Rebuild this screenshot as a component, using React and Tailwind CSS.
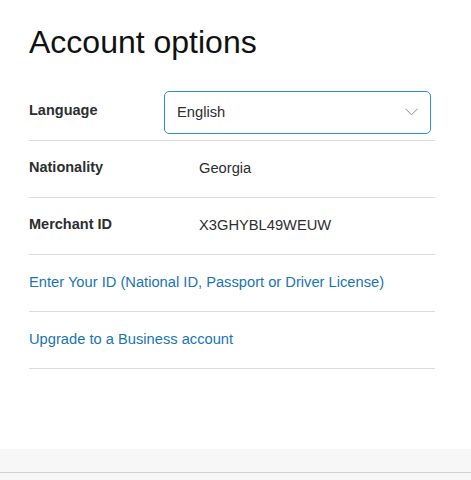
import { useState } from 'react';

const rows = [
  { label: 'Nationality', value: 'Georgia' },
  { label: 'Merchant ID', value: 'X3GHYBL49WEUW' },
];

const links = [
  'Enter Your ID (National ID, Passport or Driver License)',
  'Upgrade to a Business account',
];

function Chevron() {
  return (
    <svg width="13" height="8" viewBox="0 0 13 8" fill="none" className="shrink-0">
      <path d="M0.5 0.8 L6.5 6.8 L12.5 0.8" stroke="#8a8c8e" strokeWidth="1" />
    </svg>
  );
}

export default function App() {
  const [language] = useState('English');

  return (
    <div className="w-[471px] h-[480px] bg-white flex flex-col text-[#2c2e2f] font-['Liberation_Sans',Arial,sans-serif]">
      <div className="flex-1 pl-[29px]">
        <div className="w-[406px]">
          <h1 className="h-[84px] pt-[24px] text-[32px] leading-[37px] text-[#111]">Account options</h1>

          {/* Language */}
          <div className="h-[57px] flex items-center border-b border-[#dcdcdc]">
            <span className="w-[135px] text-[14.5px] font-bold -mt-[2px]">Language</span>
            <div className="w-[267px] h-[43px] flex items-center justify-between pl-[12px] pr-[12px] border border-[#2f8fc5] rounded-[5px]">
              <span className="text-[14.7px] text-[#2c2e2f]">{language}</span>
              <Chevron />
            </div>
          </div>

          {rows.map((r) => (
            <div key={r.label} className="h-[57px] flex items-center border-b border-[#dcdcdc]">
              <span className="w-[170px] text-[14.5px] font-bold -mt-[2px]">{r.label}</span>
              <span className="text-[14.7px] -mt-[2px]">{r.value}</span>
            </div>
          ))}

          {links.map((l) => (
            <div key={l} className="h-[57px] flex items-center border-b border-[#dcdcdc]">
              <a className="text-[14.7px] text-[#1a74b5] cursor-pointer -mt-[2px]">{l}</a>
            </div>
          ))}
        </div>
      </div>

      <div className="h-[24px] bg-[#f7f7f8] border-b border-[#cfcfd2]" />
      <div className="h-[7px] bg-[#f7f7f8]" />
    </div>
  );
}
